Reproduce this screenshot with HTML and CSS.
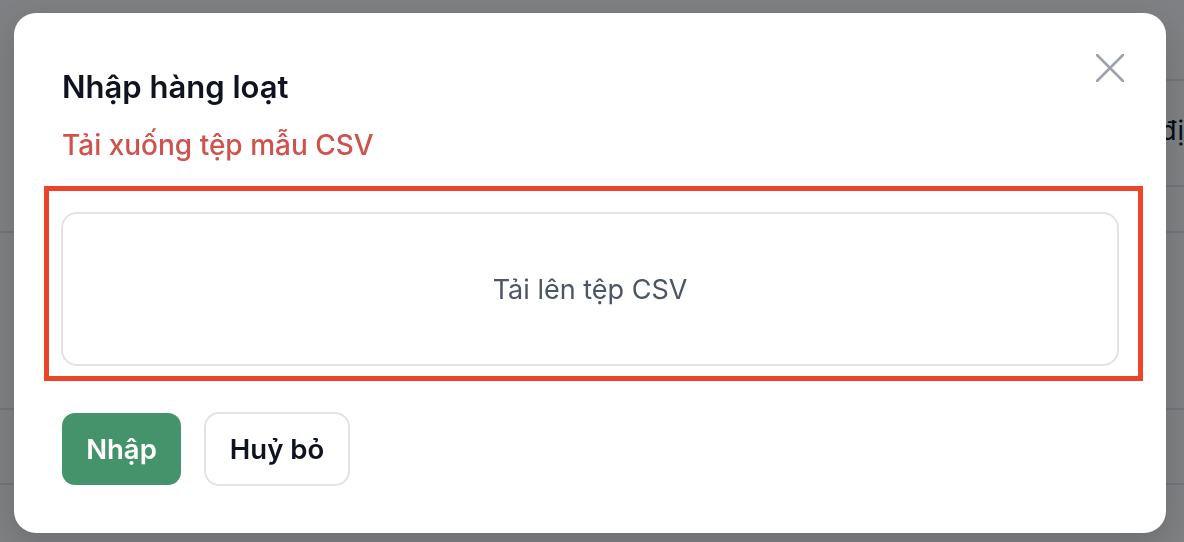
FILE: index.html
```
<!DOCTYPE html>
<html lang="vi">

<head>
    <meta charset="UTF-8">
    <meta name="viewport" content="width=device-width, initial-scale=1.0">
    <title>Nhập hàng loạt</title>
    <link rel="stylesheet" href="styles.css">
</head>

<body>
    <div id="page">
        <div class="sidenav">
            <div class="row" style="height: 233px"></div>
            <div class="row" style="height: 177px"></div>
            <div class="row" style="height: 75px"></div>
        </div>
        <div class="main">
            <div class="row" style="height: 81px"></div>
            <div class="row cell-text" style="height: 106px">đị</div>
            <div class="row" style="height: 46px"></div>
            <div class="row" style="height: 177px"></div>
            <div class="row" style="height: 75px"></div>
        </div>
    </div>

    <div id="overlay"></div>

    <div id="modal">
        <button class="close" aria-label="Đóng">
            <svg width="28" height="28" viewBox="0 0 28 28" fill="none">
                <path d="M1 1L27 27M27 1L1 27" stroke="#9ca3af" stroke-width="2.6" stroke-linecap="round" />
            </svg>
        </button>
        <h2 class="title">Nhập hàng loạt</h2>
        <a class="template-link" href="#">Tải xuống tệp mẫu CSV</a>
        <div class="highlight">
            <div class="dropzone">Tải lên tệp CSV</div>
        </div>
        <div class="actions">
            <button class="btn btn-primary">Nhập</button>
            <button class="btn btn-outline">Huỷ bỏ</button>
        </div>
    </div>
</body>

</html>
```

FILE: styles.css
```
* {
    box-sizing: border-box;
}

html,
body {
    margin: 0;
    height: 100%;
    overflow: hidden;
}

body {
    font-family: Inter, "Noto Sans", sans-serif;
    background-color: #ffffff;
}

#page {
    display: flex;
    height: 100%;
}

.sidenav {
    width: 600px;
}

.main {
    flex: 1;
}

.row {
    border-bottom: 2px solid #e5e6ea;
}

.cell-text {
    padding-left: 562px;
    padding-top: 33px;
    font-size: 27px;
    color: #111827;
}

#overlay {
    position: fixed;
    inset: 0;
    background-color: rgba(0, 1, 8, 0.5);
}

#modal {
    position: absolute;
    left: 14px;
    top: 13px;
    width: 1152px;
    height: 520px;
    background-color: #ffffff;
    border-radius: 22px;
    padding: 57px 47px 0 47px;
    display: flex;
    flex-direction: column;
    box-shadow: 0 10px 30px rgba(0, 0, 0, 0.15);
}

.close {
    position: absolute;
    top: 41px;
    right: 42px;
    padding: 0;
    border: none;
    background: none;
    display: flex;
}

.title {
    margin: 0;
    font-size: 31px;
    line-height: 34px;
    font-weight: 600;
    color: #0f1320;
    padding-left: 1px;
}

.template-link {
    margin-top: 24px;
    font-size: 28px;
    line-height: 34px;
    font-weight: 500;
    color: #d0524d;
    text-decoration: none;
    padding-left: 1px;
}

.highlight {
    margin: 24px -24px 0 -17px;
    border: 5px solid #ea4529;
    padding: 21px 19px 10px 12px;
}

.dropzone {
    height: 154px;
    border: 2px solid #e3e3e5;
    border-radius: 16px;
    display: flex;
    justify-content: center;
    align-items: center;
    font-size: 27px;
    color: #4b5563;
}

.actions {
    display: flex;
    align-items: center;
    gap: 23px;
    margin-top: 31px;
    padding-left: 1px;
}

.btn {
    font-family: inherit;
    font-size: 27.5px;
    font-weight: 600;
    border-radius: 13px;
    cursor: pointer;
}

.btn-primary {
    height: 72px;
    width: 119px;
    background-color: #44936b;
    border: none;
    color: #ffffff;
}

.btn-outline {
    height: 74px;
    width: 146px;
    background-color: #ffffff;
    border: 2px solid #e3e3e5;
    border-radius: 15px;
    color: #0f1320;
}
```
